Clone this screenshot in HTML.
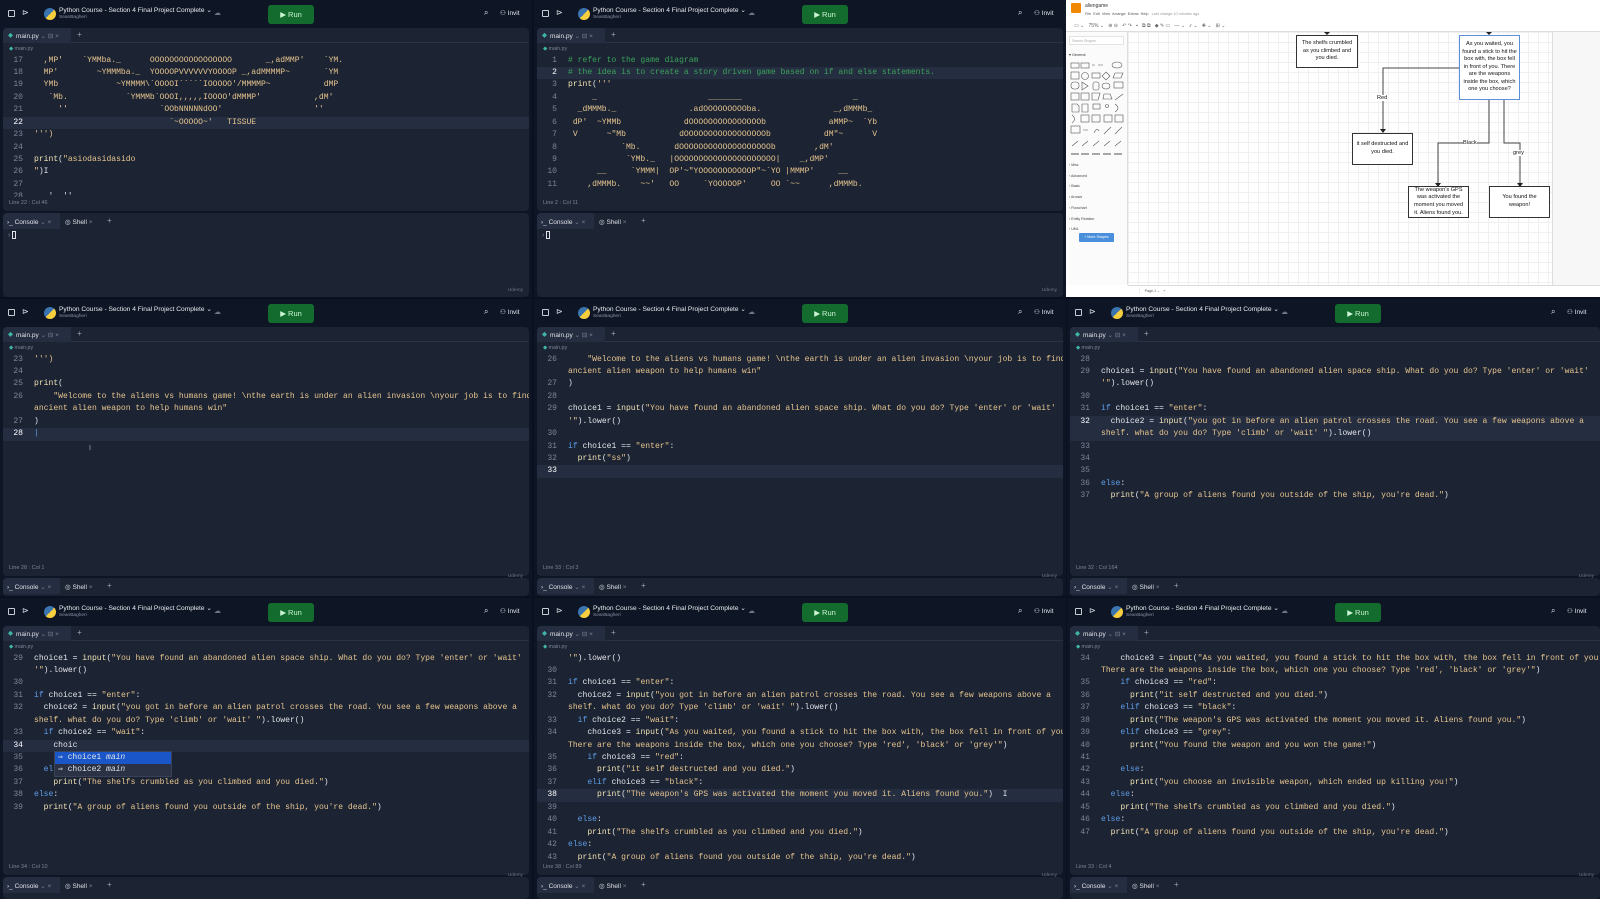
<!DOCTYPE html>
<html><head><meta charset="utf-8"><style>
*{margin:0;padding:0;box-sizing:border-box}
body{width:1600px;height:899px;background:#0b1020;position:relative;overflow:hidden;font-family:"Liberation Sans",sans-serif}
.pn{position:absolute;background:#0e1525;overflow:hidden;width:532px}
.a{position:absolute}
.ttl{position:absolute;left:59px;top:6px;font-size:6.6px;color:#e8eaee;white-space:nowrap}
.sub{position:absolute;left:59px;top:15px;font-size:4.8px;color:#8b93a3}
.run{position:absolute;left:268px;top:5px;width:46px;height:19px;background:#136c2e;border-radius:3px;color:#cdf5d5;font-size:7.5px;line-height:19px;text-align:center}
.ed{position:absolute;left:3px;right:3px;top:28px;background:#1c2333;border-radius:4px;overflow:hidden}
.tb{position:absolute;top:0;left:0;right:0;height:15px;border-bottom:1px solid #2b3245;font-size:6.5px;color:#dfe2e8}
.bc{position:absolute;top:18px;left:6px;font-size:5.3px;color:#7d8597}
.cd{position:absolute;top:26.5px;left:0;right:0;font:8.05px "Liberation Mono",monospace;color:#e2e4e9;overflow:hidden}
.r{height:12.45px;line-height:12.45px;white-space:pre;padding-left:31px;position:relative}
.r i{position:absolute;left:0;width:20px;text-align:right;font-style:normal;color:#7d8597}
.r.cur{background:#252d40}.r.cur i{color:#fff}
.k{color:#5d9ee8}.s{color:#e6c58f}.f{color:#efe2b3}.c{color:#3aa35a}
.st{position:absolute;left:6px;font-size:5.5px;color:#7d8597}
.cs{position:absolute;left:3px;right:3px;background:#1c2333;border-radius:4px;font-size:6.5px;color:#dfe2e8}
.ud{position:absolute;right:6px;font-size:4.8px;color:#6d7587}
.py{position:absolute;left:44px;top:8px;width:12px;height:12px;border-radius:50%;background:linear-gradient(135deg,#3a75b0 50%,#f7cf3e 50%)}
.dw{position:absolute;font-family:"Liberation Sans",sans-serif}
.bx{position:absolute;background:#fff;border:1.3px solid #333;font-size:5.6px;color:#111;text-align:center;display:flex;align-items:center;justify-content:center;line-height:7.6px}
</style></head><body>

<!-- P1 -->
<div class="pn" style="left:0;top:0;height:297px">
 <div class="a" style="left:8px;top:10px;width:7px;height:7px;border:1px solid #c8ccd4;border-radius:1px"></div>
 <div class="a" style="left:22px;top:8px;color:#dfe2e8;font-size:8px">⊳</div>
 <div class="py"></div><div class="ttl">Python Course - Section 4 Final Project Complete ⌄</div><div class="sub">SeanBagheri</div>
 <div class="a" style="left:214px;top:9px;color:#6d7587;font-size:7px">☁</div>
 <div class="run">▶ Run</div>
 <div class="a" style="left:484px;top:8px;color:#dfe2e8;font-size:8px">⌕</div>
 <div class="a" style="left:500px;top:9px;color:#dfe2e8;font-size:6.5px;white-space:nowrap">⚇ Invit</div>
 <div class="ed" style="height:183px">
  <div class="tb"><div class="a" style="left:0;top:0;width:68px;height:15px;background:#252d40"></div><div class="a" style="left:5px;top:3px;color:#3fb6a8">◆</div><div class="a" style="left:13px;top:4px">main.py <span style="color:#7d8597">⌄ ⊟ ×</span></div><div class="a" style="left:74px;top:2px;font-size:8px;color:#9aa1b0">+</div></div>
  <div class="bc"><span style="color:#3fb6a8">◆</span> main.py</div>
  <div class="cd" style="height:142px">
<div class="r"><i>17</i><span class="s">  ,MP'    &#96;YMMba._      OOOOOOOOOOOOOOOOO       _,adMMP'    &#96;YM.</span></div>
<div class="r"><i>18</i><span class="s">  MP'        ~YMMMba._  YOOOOPVVVVVVYOOOOP _,adMMMMP~       &#96;YM</span></div>
<div class="r"><i>19</i><span class="s">  YMb            ~YMMMM\&#96;OOOOI&#96;&#96;&#96;&#96;&#96;IOOOOO'/MMMMP~           dMP</span></div>
<div class="r"><i>20</i><span class="s">   &#96;Mb.            &#96;YMMMb&#96;OOOI,,,,,IOOOO'dMMMP'           ,dM'</span></div>
<div class="r"><i>21</i><span class="s">     ''                   &#96;OObNNNNNdOO'                   ''</span></div>
<div class="r cur"><i>22</i><span class="s">                            &#96;~OOOOO~'   TISSUE</span></div>
<div class="r"><i>23</i><span class="s">''')</span></div>
<div class="r"><i>24</i></div>
<div class="r"><i>25</i><span class="f">print</span>(<span class="s">"asiodasidasido</span></div>
<div class="r"><i>26</i><span class="s">"</span>)I</div>
<div class="r"><i>27</i></div>
<div class="r"><i>28</i>   '  ''</div>
  </div>
  <div class="st" style="top:172px">Line 22 : Col 46</div>
 </div>
 <div class="cs" style="top:213px;height:84px">
  <div class="a" style="left:0;top:0;width:57px;height:16px;background:#252d40;border-radius:4px 0 0 0"></div>
  <div class="a" style="left:4px;top:5px;white-space:nowrap">›_ Console <span style="color:#7d8597">⌄ ×</span></div>
  <div class="a" style="left:62px;top:5px;white-space:nowrap">◎ Shell <span style="color:#7d8597">×</span></div>
  <div class="a" style="left:104px;top:3px;font-size:8px;color:#9aa1b0">+</div>
  <div class="a" style="left:5px;top:18px;color:#7d8597;font-size:7px">› <span style="display:inline-block;width:4px;height:8px;border:1px solid #dfe2e8;vertical-align:middle"></span></div>
  <div class="ud" style="bottom:4px">Udemy</div>
 </div>
</div>

<!-- P2 -->
<div class="pn" style="left:534px;top:0;height:297px">
 <div class="a" style="left:8px;top:10px;width:7px;height:7px;border:1px solid #c8ccd4;border-radius:1px"></div>
 <div class="a" style="left:22px;top:8px;color:#dfe2e8;font-size:8px">⊳</div>
 <div class="py"></div><div class="ttl">Python Course - Section 4 Final Project Complete ⌄</div><div class="sub">SeanBagheri</div>
 <div class="a" style="left:214px;top:9px;color:#6d7587;font-size:7px">☁</div>
 <div class="run">▶ Run</div>
 <div class="a" style="left:484px;top:8px;color:#dfe2e8;font-size:8px">⌕</div>
 <div class="a" style="left:500px;top:9px;color:#dfe2e8;font-size:6.5px;white-space:nowrap">⚇ Invit</div>
 <div class="ed" style="height:183px">
  <div class="tb"><div class="a" style="left:0;top:0;width:68px;height:15px;background:#252d40"></div><div class="a" style="left:5px;top:3px;color:#3fb6a8">◆</div><div class="a" style="left:13px;top:4px">main.py <span style="color:#7d8597">⌄ ⊟ ×</span></div><div class="a" style="left:74px;top:2px;font-size:8px;color:#9aa1b0">+</div></div>
  <div class="bc"><span style="color:#3fb6a8">◆</span> main.py</div>
  <div class="cd" style="height:142px">
<div class="r"><i>1</i><span class="c"># refer to the game diagram</span></div>
<div class="r cur"><i>2</i><span class="c"># the idea is to create a story driven game based on if and else statements.</span></div>
<div class="r"><i>3</i><span class="f">print</span>(<span class="s">'''</span></div>
<div class="r"><i>4</i><span class="s">     _                       _______                       _</span></div>
<div class="r"><i>5</i><span class="s">  _dMMMb._               .adOOOOOOOOOba.               _,dMMMb_</span></div>
<div class="r"><i>6</i><span class="s"> dP'  ~YMMb             dOOOOOOOOOOOOOOOb             aMMP~  &#96;Yb</span></div>
<div class="r"><i>7</i><span class="s"> V      ~"Mb           dOOOOOOOOOOOOOOOOOb           dM"~      V</span></div>
<div class="r"><i>8</i><span class="s">           &#96;Mb.       dOOOOOOOOOOOOOOOOOOOb        ,dM'</span></div>
<div class="r"><i>9</i><span class="s">            &#96;YMb._   |OOOOOOOOOOOOOOOOOOOOO|    _,dMP'</span></div>
<div class="r"><i>10</i><span class="s">      __     &#96;YMMM|  OP'~"YOOOOOOOOOOOP"~&#96;YO |MMMP'     __</span></div>
<div class="r"><i>11</i><span class="s">    ,dMMMb.    ~~'   OO     &#96;YOOOOOP'     OO &#96;~~      ,dMMMb.</span></div>
  </div>
  <div class="st" style="top:172px">Line 2 : Col 11</div>
 </div>
 <div class="cs" style="top:213px;height:84px">
  <div class="a" style="left:0;top:0;width:57px;height:16px;background:#252d40;border-radius:4px 0 0 0"></div>
  <div class="a" style="left:4px;top:5px;white-space:nowrap">›_ Console <span style="color:#7d8597">⌄ ×</span></div>
  <div class="a" style="left:62px;top:5px;white-space:nowrap">◎ Shell <span style="color:#7d8597">×</span></div>
  <div class="a" style="left:104px;top:3px;font-size:8px;color:#9aa1b0">+</div>
  <div class="a" style="left:5px;top:18px;color:#7d8597;font-size:7px">› <span style="display:inline-block;width:4px;height:8px;border:1px solid #dfe2e8;vertical-align:middle"></span></div>
  <div class="ud" style="bottom:4px">Udemy</div>
 </div>
</div>

<!-- P3 draw.io -->
<div class="dw" style="left:1066px;top:0;width:534px;height:297px;background:#fff">
 <div class="a" style="left:5px;top:3px;width:10px;height:10px;background:#f08705;border-radius:1px"></div>
 <div class="a" style="left:19px;top:3px;font-size:5px;color:#333">aliengame</div>
 <div class="a" style="left:19px;top:12px;font-size:3.8px;color:#555;white-space:nowrap">File &nbsp;Edit &nbsp;View &nbsp;Arrange &nbsp;Extras &nbsp;Help &nbsp; <span style="color:#999">Last change 10 minutes ago</span></div>
 <div class="a" style="left:0;top:20px;width:534px;height:12px;border-bottom:1px solid #ddd;font-size:5px;color:#666;padding-left:8px;line-height:12px;white-space:nowrap">▭ ⌄ &nbsp; 75% ⌄ &nbsp; ⊕ ⊖ &nbsp; ↶ ↷ &nbsp; ▪ &nbsp; ⧉ ⧉ &nbsp; ◆ ✎ ▭ &nbsp; — ⌄ &nbsp; ⤴ ⌄ &nbsp; ✚ ⌄ &nbsp; ⊞ ⌄</div>
 <div class="a" style="left:0;top:32px;width:62px;height:253px;background:#fbfbfb;border-right:1px solid #ddd">
  <div class="a" style="left:3px;top:4px;width:55px;height:9px;border:1px solid #e3e3e3;background:#fff;font-size:3.5px;color:#aaa;padding:2px">Search Shapes</div>
  <div class="a" style="left:3px;top:20px;font-size:3.8px;color:#333">▾ General</div>
  <svg class="a" style="left:3px;top:28px" width="56" height="96" fill="none" stroke="#555" stroke-width=".6">
   <rect x="2" y="3" width="8" height="5"/><rect x="12" y="3" width="8" height="5"/><path d="M23 5h3M29 5h5"/><ellipse cx="48" cy="5" rx="5" ry="3"/>
   <rect x="2" y="12" width="8" height="7"/><circle cx="16" cy="16" r="3.5"/><rect x="23" y="13" width="8" height="5"/><path d="M37 12l4 4-4 4-4-4z"/><path d="M46 13h8l-2 5h-8z"/>
   <rect x="2" y="22" width="8" height="7" rx="3"/><path d="M13 22l6 4-6 4z"/><rect x="24" y="22" width="6" height="8" rx="2"/><ellipse cx="37" cy="26" rx="4" ry="3"/><rect x="45" y="22" width="9" height="6"/>
   <rect x="2" y="33" width="8" height="7"/><rect x="12" y="33" width="8" height="7"/><path d="M23 33h8l-2 7h-6z"/><path d="M35 34h6l2 5h-9z"/><path d="M46 40l8-6"/>
   <path d="M3 44h5l2 2v6H3z"/><path d="M13 44h6v8h-6z"/><rect x="24" y="44" width="7" height="5"/><circle cx="38" cy="46" r="1.5"/><path d="M46 44q6 4 0 8"/>
   <path d="M3 55q5 4 0 8"/><rect x="12" y="55" width="8" height="7"/><rect x="23" y="55" width="8" height="7"/><rect x="35" y="55" width="8" height="7"/><rect x="46" y="55" width="8" height="7"/>
   <rect x="2" y="66" width="9" height="7"/><path d="M14 70h5M25 73q3-6 5-2M35 74l7-7M46 74l7-7"/>
   <path d="M3 86l6-5M13 86l6-5M24 86l6-5M35 86l6-5M46 86l6-5"/>
   <path d="M2 94h8M12 94h8M23 94h8M34 94h8M45 94h8" stroke-width="1"/>
  </svg>
  <div class="a" style="left:3px;top:128px;font-size:3.6px;color:#444;line-height:10.7px">› Misc<br>› Advanced<br>› Basic<br>› Arrows<br>› Flowchart<br>› Entity Relation<br>› UML</div>
  <div class="a" style="left:13px;top:201px;width:35px;height:9px;background:#4a8fdc;border-radius:1px;font-size:3.6px;color:#fff;text-align:center;line-height:9px">+ More Shapes</div>
 </div>
 <div class="a" style="left:62px;top:32px;width:424px;height:253px;background-color:#fff;background-image:linear-gradient(#eef0f3 1px,transparent 1px),linear-gradient(90deg,#eef0f3 1px,transparent 1px);background-size:10px 10px"></div>
 <div class="a" style="left:486px;top:32px;width:48px;height:253px;background:#f7f7f7;border-left:1px solid #ddd"></div>
 <div class="a" style="left:62px;top:285px;width:472px;height:12px;background:#fff;border-top:1px solid #ddd;font-size:3.6px;color:#555;line-height:10px;padding-left:10px">⋮ &nbsp; Page-1 ⌄ &nbsp; +</div>
</div>
<svg class="a" style="left:0;top:0" width="1600" height="300" fill="none" stroke="#444" stroke-width="1">
 <path d="M1459 68H1383V130M1489 100V143H1438V184M1504 100V143H1520V184"/>
 <g fill="#222" stroke="none"><path d="M1380 129h6l-3 4z"/><path d="M1435 183h6l-3 4z"/><path d="M1517 183h6l-3 4z"/><path d="M1324 32h6l-3 3z"/><path d="M1486 32h6l-3 3z"/></g>
</svg>
<div class="bx" style="left:1296px;top:35px;width:62px;height:33px">The shelfs crumbled<br>as you climbed and<br>you died.</div>
<div class="bx" style="left:1459px;top:35px;width:61px;height:65px;border-color:#5b8fd8">As you waited, you<br>found a stick to hit the<br>box with, the box fell<br>in front of you. There<br>are the weapons<br>inside the box, which<br>one you choose?</div>
<div class="bx" style="left:1352px;top:133px;width:61px;height:32px">it self destructed and<br>you died.</div>
<div class="bx" style="left:1408px;top:186px;width:61px;height:32px">The weapon's GPS<br>was activated the<br>moment you moved<br>it. Aliens found you.</div>
<div class="bx" style="left:1489px;top:186px;width:61px;height:32px">You found the<br>weapon!</div>
<div class="dw" style="left:1377px;top:95px;font-size:5.6px;background:#fff;color:#111">Red</div>
<div class="dw" style="left:1463px;top:140px;font-size:5.6px;background:#fff;color:#111">Black</div>
<div class="dw" style="left:1513px;top:150px;font-size:5.6px;background:#fff;color:#111">grey</div>

<!-- P4 -->
<div class="pn" style="left:0;top:299px;height:297px">
 <div class="a" style="left:8px;top:10px;width:7px;height:7px;border:1px solid #c8ccd4;border-radius:1px"></div>
 <div class="a" style="left:22px;top:8px;color:#dfe2e8;font-size:8px">⊳</div>
 <div class="py"></div><div class="ttl">Python Course - Section 4 Final Project Complete ⌄</div><div class="sub">SeanBagheri</div>
 <div class="a" style="left:214px;top:9px;color:#6d7587;font-size:7px">☁</div>
 <div class="run">▶ Run</div>
 <div class="a" style="left:484px;top:8px;color:#dfe2e8;font-size:8px">⌕</div>
 <div class="a" style="left:500px;top:9px;color:#dfe2e8;font-size:6.5px;white-space:nowrap">⚇ Invit</div>
 <div class="ed" style="height:249px">
  <div class="tb"><div class="a" style="left:0;top:0;width:68px;height:15px;background:#252d40"></div><div class="a" style="left:5px;top:3px;color:#3fb6a8">◆</div><div class="a" style="left:13px;top:4px">main.py <span style="color:#7d8597">⌄ ⊟ ×</span></div><div class="a" style="left:74px;top:2px;font-size:8px;color:#9aa1b0">+</div></div>
  <div class="bc"><span style="color:#3fb6a8">◆</span> main.py</div>
  <div class="cd" style="height:208px">
<div class="r"><i>23</i><span class="s">''')</span></div>
<div class="r"><i>24</i></div>
<div class="r"><i>25</i><span class="f">print</span>(</div>
<div class="r"><i>26</i><span class="s">    "Welcome to the aliens vs humans game! \nthe earth is under an alien invasion \nyour job is to find the</span></div>
<div class="r"><span class="s">ancient alien weapon to help humans win"</span></div>
<div class="r"><i>27</i>)</div>
<div class="r cur"><i>28</i><span style="color:#5d9ee8">|</span></div>
  </div>
  <div class="a" style="left:86px;top:118px;color:#aab;font-size:7px">I</div>
  <div class="st" style="top:238px">Line 28 : Col 1</div>
 </div>
 <div class="cs" style="top:279px;height:18px">
  <div class="a" style="left:0;top:0;width:57px;height:16px;background:#252d40;border-radius:4px 0 0 0"></div>
  <div class="a" style="left:4px;top:5px;white-space:nowrap">›_ Console <span style="color:#7d8597">⌄ ×</span></div>
  <div class="a" style="left:62px;top:5px;white-space:nowrap">◎ Shell <span style="color:#7d8597">×</span></div>
  <div class="a" style="left:104px;top:3px;font-size:8px;color:#9aa1b0">+</div>
  <div class="ud" style="top:-4px">Udemy</div>
 </div>
</div>

<!-- P5 -->
<div class="pn" style="left:534px;top:299px;height:297px">
 <div class="a" style="left:8px;top:10px;width:7px;height:7px;border:1px solid #c8ccd4;border-radius:1px"></div>
 <div class="a" style="left:22px;top:8px;color:#dfe2e8;font-size:8px">⊳</div>
 <div class="py"></div><div class="ttl">Python Course - Section 4 Final Project Complete ⌄</div><div class="sub">SeanBagheri</div>
 <div class="a" style="left:214px;top:9px;color:#6d7587;font-size:7px">☁</div>
 <div class="run">▶ Run</div>
 <div class="a" style="left:484px;top:8px;color:#dfe2e8;font-size:8px">⌕</div>
 <div class="a" style="left:500px;top:9px;color:#dfe2e8;font-size:6.5px;white-space:nowrap">⚇ Invit</div>
 <div class="ed" style="height:249px">
  <div class="tb"><div class="a" style="left:0;top:0;width:68px;height:15px;background:#252d40"></div><div class="a" style="left:5px;top:3px;color:#3fb6a8">◆</div><div class="a" style="left:13px;top:4px">main.py <span style="color:#7d8597">⌄ ⊟ ×</span></div><div class="a" style="left:74px;top:2px;font-size:8px;color:#9aa1b0">+</div></div>
  <div class="bc"><span style="color:#3fb6a8">◆</span> main.py</div>
  <div class="cd" style="height:208px">
<div class="r"><i>26</i><span class="s">    "Welcome to the aliens vs humans game! \nthe earth is under an alien invasion \nyour job is to find the</span></div>
<div class="r"><span class="s">ancient alien weapon to help humans win"</span></div>
<div class="r"><i>27</i>)</div>
<div class="r"><i>28</i></div>
<div class="r"><i>29</i>choice1 = <span class="f">input</span>(<span class="s">"You have found an abandoned alien space ship. What do you do? Type 'enter' or 'wait'</span></div>
<div class="r"><span class="s">'"</span>).lower()</div>
<div class="r"><i>30</i></div>
<div class="r"><i>31</i><span class="k">if</span> choice1 == <span class="s">"enter"</span>:</div>
<div class="r"><i>32</i>  <span class="f">print</span>(<span class="s">"ss"</span>)</div>
<div class="r cur"><i>33</i></div>
  </div>
  <div class="st" style="top:238px">Line 33 : Col 3</div>
 </div>
 <div class="cs" style="top:279px;height:18px">
  <div class="a" style="left:0;top:0;width:57px;height:16px;background:#252d40;border-radius:4px 0 0 0"></div>
  <div class="a" style="left:4px;top:5px;white-space:nowrap">›_ Console <span style="color:#7d8597">⌄ ×</span></div>
  <div class="a" style="left:62px;top:5px;white-space:nowrap">◎ Shell <span style="color:#7d8597">×</span></div>
  <div class="a" style="left:104px;top:3px;font-size:8px;color:#9aa1b0">+</div>
  <div class="ud" style="top:-4px">Udemy</div>
 </div>
</div>

<!-- P6 -->
<div class="pn" style="left:1067px;top:299px;height:297px;width:533px">
 <div class="a" style="left:8px;top:10px;width:7px;height:7px;border:1px solid #c8ccd4;border-radius:1px"></div>
 <div class="a" style="left:22px;top:8px;color:#dfe2e8;font-size:8px">⊳</div>
 <div class="py"></div><div class="ttl">Python Course - Section 4 Final Project Complete ⌄</div><div class="sub">SeanBagheri</div>
 <div class="a" style="left:214px;top:9px;color:#6d7587;font-size:7px">☁</div>
 <div class="run">▶ Run</div>
 <div class="a" style="left:484px;top:8px;color:#dfe2e8;font-size:8px">⌕</div>
 <div class="a" style="left:500px;top:9px;color:#dfe2e8;font-size:6.5px;white-space:nowrap">⚇ Invit</div>
 <div class="ed" style="height:249px;right:0">
  <div class="tb"><div class="a" style="left:0;top:0;width:68px;height:15px;background:#252d40"></div><div class="a" style="left:5px;top:3px;color:#3fb6a8">◆</div><div class="a" style="left:13px;top:4px">main.py <span style="color:#7d8597">⌄ ⊟ ×</span></div><div class="a" style="left:74px;top:2px;font-size:8px;color:#9aa1b0">+</div></div>
  <div class="bc"><span style="color:#3fb6a8">◆</span> main.py</div>
  <div class="cd" style="height:208px">
<div class="r"><i>28</i></div>
<div class="r"><i>29</i>choice1 = <span class="f">input</span>(<span class="s">"You have found an abandoned alien space ship. What do you do? Type 'enter' or 'wait'</span></div>
<div class="r"><span class="s">'"</span>).lower()</div>
<div class="r"><i>30</i></div>
<div class="r"><i>31</i><span class="k">if</span> choice1 == <span class="s">"enter"</span>:</div>
<div class="r cur"><i>32</i>  choice2 = <span class="f">input</span>(<span class="s">"you got in before an alien patrol crosses the road. You see a few weapons above a</span></div>
<div class="r cur"><span class="s">shelf. what do you do? Type 'climb' or 'wait' "</span>).lower()</div>
<div class="r"><i>33</i></div>
<div class="r"><i>34</i></div>
<div class="r"><i>35</i></div>
<div class="r"><i>36</i><span class="k">else</span>:</div>
<div class="r"><i>37</i>  <span class="f">print</span>(<span class="s">"A group of aliens found you outside of the ship, you're dead."</span>)</div>
  </div>
  <div class="st" style="top:238px">Line 32 : Col 164</div>
 </div>
 <div class="cs" style="top:279px;height:18px;right:0">
  <div class="a" style="left:0;top:0;width:57px;height:16px;background:#252d40;border-radius:4px 0 0 0"></div>
  <div class="a" style="left:4px;top:5px;white-space:nowrap">›_ Console <span style="color:#7d8597">⌄ ×</span></div>
  <div class="a" style="left:62px;top:5px;white-space:nowrap">◎ Shell <span style="color:#7d8597">×</span></div>
  <div class="a" style="left:104px;top:3px;font-size:8px;color:#9aa1b0">+</div>
  <div class="ud" style="top:-4px">Udemy</div>
 </div>
</div>

<!-- P7 -->
<div class="pn" style="left:0;top:598px;height:301px">
 <div class="a" style="left:8px;top:10px;width:7px;height:7px;border:1px solid #c8ccd4;border-radius:1px"></div>
 <div class="a" style="left:22px;top:8px;color:#dfe2e8;font-size:8px">⊳</div>
 <div class="py"></div><div class="ttl">Python Course - Section 4 Final Project Complete ⌄</div><div class="sub">SeanBagheri</div>
 <div class="a" style="left:214px;top:9px;color:#6d7587;font-size:7px">☁</div>
 <div class="run">▶ Run</div>
 <div class="a" style="left:484px;top:8px;color:#dfe2e8;font-size:8px">⌕</div>
 <div class="a" style="left:500px;top:9px;color:#dfe2e8;font-size:6.5px;white-space:nowrap">⚇ Invit</div>
 <div class="ed" style="height:249px">
  <div class="tb"><div class="a" style="left:0;top:0;width:68px;height:15px;background:#252d40"></div><div class="a" style="left:5px;top:3px;color:#3fb6a8">◆</div><div class="a" style="left:13px;top:4px">main.py <span style="color:#7d8597">⌄ ⊟ ×</span></div><div class="a" style="left:74px;top:2px;font-size:8px;color:#9aa1b0">+</div></div>
  <div class="bc"><span style="color:#3fb6a8">◆</span> main.py</div>
  <div class="cd" style="height:208px">
<div class="r"><i>29</i>choice1 = <span class="f">input</span>(<span class="s">"You have found an abandoned alien space ship. What do you do? Type 'enter' or 'wait'</span></div>
<div class="r"><span class="s">'"</span>).lower()</div>
<div class="r"><i>30</i></div>
<div class="r"><i>31</i><span class="k">if</span> choice1 == <span class="s">"enter"</span>:</div>
<div class="r"><i>32</i>  choice2 = <span class="f">input</span>(<span class="s">"you got in before an alien patrol crosses the road. You see a few weapons above a</span></div>
<div class="r"><span class="s">shelf. what do you do? Type 'climb' or 'wait' "</span>).lower()</div>
<div class="r"><i>33</i>  <span class="k">if</span> choice2 == <span class="s">"wait"</span>:</div>
<div class="r cur"><i>34</i>    choic</div>
<div class="r"><i>35</i></div>
<div class="r"><i>36</i>  <span class="k">el</span></div>
<div class="r"><i>37</i>    <span class="f">print</span>(<span class="s">"The shelfs crumbled as you climbed and you died."</span>)</div>
<div class="r"><i>38</i><span class="k">else</span>:</div>
<div class="r"><i>39</i>  <span class="f">print</span>(<span class="s">"A group of aliens found you outside of the ship, you're dead."</span>)</div>
  </div>
  <div class="a" style="left:51px;top:125px;width:118px;height:26px;background:#2b3245;border:1px solid #3a4258;font:8px 'Liberation Mono',monospace;color:#e2e4e9">
   <div style="height:12px;line-height:12px;background:#1a56c8;padding-left:3px">⇒ choice1 <i>main</i></div>
   <div style="height:12px;line-height:12px;padding-left:3px">⇒ choice2 <i>main</i></div>
  </div>
  <div class="st" style="top:238px">Line 34 : Col 10</div>
 </div>
 <div class="cs" style="top:279px;height:22px">
  <div class="a" style="left:0;top:0;width:57px;height:16px;background:#252d40;border-radius:4px 0 0 0"></div>
  <div class="a" style="left:4px;top:5px;white-space:nowrap">›_ Console <span style="color:#7d8597">⌄ ×</span></div>
  <div class="a" style="left:62px;top:5px;white-space:nowrap">◎ Shell <span style="color:#7d8597">×</span></div>
  <div class="a" style="left:104px;top:3px;font-size:8px;color:#9aa1b0">+</div>
  <div class="ud" style="top:-4px">Udemy</div>
 </div>
</div>

<!-- P8 -->
<div class="pn" style="left:534px;top:598px;height:301px">
 <div class="a" style="left:8px;top:10px;width:7px;height:7px;border:1px solid #c8ccd4;border-radius:1px"></div>
 <div class="a" style="left:22px;top:8px;color:#dfe2e8;font-size:8px">⊳</div>
 <div class="py"></div><div class="ttl">Python Course - Section 4 Final Project Complete ⌄</div><div class="sub">SeanBagheri</div>
 <div class="a" style="left:214px;top:9px;color:#6d7587;font-size:7px">☁</div>
 <div class="run">▶ Run</div>
 <div class="a" style="left:484px;top:8px;color:#dfe2e8;font-size:8px">⌕</div>
 <div class="a" style="left:500px;top:9px;color:#dfe2e8;font-size:6.5px;white-space:nowrap">⚇ Invit</div>
 <div class="ed" style="height:249px">
  <div class="tb"><div class="a" style="left:0;top:0;width:68px;height:15px;background:#252d40"></div><div class="a" style="left:5px;top:3px;color:#3fb6a8">◆</div><div class="a" style="left:13px;top:4px">main.py <span style="color:#7d8597">⌄ ⊟ ×</span></div><div class="a" style="left:74px;top:2px;font-size:8px;color:#9aa1b0">+</div></div>
  <div class="bc"><span style="color:#3fb6a8">◆</span> main.py</div>
  <div class="cd" style="height:208px">
<div class="r"><span class="s">'"</span>).lower()</div>
<div class="r"><i>30</i></div>
<div class="r"><i>31</i><span class="k">if</span> choice1 == <span class="s">"enter"</span>:</div>
<div class="r"><i>32</i>  choice2 = <span class="f">input</span>(<span class="s">"you got in before an alien patrol crosses the road. You see a few weapons above a</span></div>
<div class="r"><span class="s">shelf. what do you do? Type 'climb' or 'wait' "</span>).lower()</div>
<div class="r"><i>33</i>  <span class="k">if</span> choice2 == <span class="s">"wait"</span>:</div>
<div class="r"><i>34</i>    choice3 = <span class="f">input</span>(<span class="s">"As you waited, you found a stick to hit the box with, the box fell in front of you.</span></div>
<div class="r"><span class="s">There are the weapons inside the box, which one you choose? Type 'red', 'black' or 'grey'"</span>)</div>
<div class="r"><i>35</i>    <span class="k">if</span> choice3 == <span class="s">"red"</span>:</div>
<div class="r"><i>36</i>      <span class="f">print</span>(<span class="s">"it self destructed and you died."</span>)</div>
<div class="r"><i>37</i>    <span class="k">elif</span> choice3 == <span class="s">"black"</span>:</div>
<div class="r cur"><i>38</i>      <span class="f">print</span>(<span class="s">"The weapon's GPS was activated the moment you moved it. Aliens found you."</span>)  I</div>
<div class="r"><i>39</i></div>
<div class="r"><i>40</i>  <span class="k">else</span>:</div>
<div class="r"><i>41</i>    <span class="f">print</span>(<span class="s">"The shelfs crumbled as you climbed and you died."</span>)</div>
<div class="r"><i>42</i><span class="k">else</span>:</div>
<div class="r"><i>43</i>  <span class="f">print</span>(<span class="s">"A group of aliens found you outside of the ship, you're dead."</span>)</div>
  </div>
  <div class="st" style="top:238px">Line 38 : Col 89</div>
 </div>
 <div class="cs" style="top:279px;height:22px">
  <div class="a" style="left:0;top:0;width:57px;height:16px;background:#252d40;border-radius:4px 0 0 0"></div>
  <div class="a" style="left:4px;top:5px;white-space:nowrap">›_ Console <span style="color:#7d8597">⌄ ×</span></div>
  <div class="a" style="left:62px;top:5px;white-space:nowrap">◎ Shell <span style="color:#7d8597">×</span></div>
  <div class="a" style="left:104px;top:3px;font-size:8px;color:#9aa1b0">+</div>
  <div class="ud" style="top:-4px">Udemy</div>
 </div>
</div>

<!-- P9 -->
<div class="pn" style="left:1067px;top:598px;height:301px;width:533px">
 <div class="a" style="left:8px;top:10px;width:7px;height:7px;border:1px solid #c8ccd4;border-radius:1px"></div>
 <div class="a" style="left:22px;top:8px;color:#dfe2e8;font-size:8px">⊳</div>
 <div class="py"></div><div class="ttl">Python Course - Section 4 Final Project Complete ⌄</div><div class="sub">SeanBagheri</div>
 <div class="a" style="left:214px;top:9px;color:#6d7587;font-size:7px">☁</div>
 <div class="run">▶ Run</div>
 <div class="a" style="left:484px;top:8px;color:#dfe2e8;font-size:8px">⌕</div>
 <div class="a" style="left:500px;top:9px;color:#dfe2e8;font-size:6.5px;white-space:nowrap">⚇ Invit</div>
 <div class="ed" style="height:249px;right:0">
  <div class="tb"><div class="a" style="left:0;top:0;width:68px;height:15px;background:#252d40"></div><div class="a" style="left:5px;top:3px;color:#3fb6a8">◆</div><div class="a" style="left:13px;top:4px">main.py <span style="color:#7d8597">⌄ ⊟ ×</span></div><div class="a" style="left:74px;top:2px;font-size:8px;color:#9aa1b0">+</div></div>
  <div class="bc"><span style="color:#3fb6a8">◆</span> main.py</div>
  <div class="cd" style="height:208px">
<div class="r"><i>34</i>    choice3 = <span class="f">input</span>(<span class="s">"As you waited, you found a stick to hit the box with, the box fell in front of you.</span></div>
<div class="r"><span class="s">There are the weapons inside the box, which one you choose? Type 'red', 'black' or 'grey'"</span>)</div>
<div class="r"><i>35</i>    <span class="k">if</span> choice3 == <span class="s">"red"</span>:</div>
<div class="r"><i>36</i>      <span class="f">print</span>(<span class="s">"it self destructed and you died."</span>)</div>
<div class="r"><i>37</i>    <span class="k">elif</span> choice3 == <span class="s">"black"</span>:</div>
<div class="r"><i>38</i>      <span class="f">print</span>(<span class="s">"The weapon's GPS was activated the moment you moved it. Aliens found you."</span>)</div>
<div class="r"><i>39</i>    <span class="k">elif</span> choice3 == <span class="s">"grey"</span>:</div>
<div class="r"><i>40</i>      <span class="f">print</span>(<span class="s">"You found the weapon and you won the game!"</span>)</div>
<div class="r"><i>41</i></div>
<div class="r"><i>42</i>    <span class="k">else</span>:</div>
<div class="r"><i>43</i>      <span class="f">print</span>(<span class="s">"you choose an invisible weapon, which ended up killing you!"</span>)</div>
<div class="r"><i>44</i>  <span class="k">else</span>:</div>
<div class="r"><i>45</i>    <span class="f">print</span>(<span class="s">"The shelfs crumbled as you climbed and you died."</span>)</div>
<div class="r"><i>46</i><span class="k">else</span>:</div>
<div class="r"><i>47</i>  <span class="f">print</span>(<span class="s">"A group of aliens found you outside of the ship, you're dead."</span>)</div>
  </div>
  <div class="st" style="top:238px">Line 33 : Col 4</div>
 </div>
 <div class="cs" style="top:279px;height:22px;right:0">
  <div class="a" style="left:0;top:0;width:57px;height:16px;background:#252d40;border-radius:4px 0 0 0"></div>
  <div class="a" style="left:4px;top:5px;white-space:nowrap">›_ Console <span style="color:#7d8597">⌄ ×</span></div>
  <div class="a" style="left:62px;top:5px;white-space:nowrap">◎ Shell <span style="color:#7d8597">×</span></div>
  <div class="a" style="left:104px;top:3px;font-size:8px;color:#9aa1b0">+</div>
  <div class="ud" style="top:-4px">Udemy</div>
 </div>
</div>

</body></html>
